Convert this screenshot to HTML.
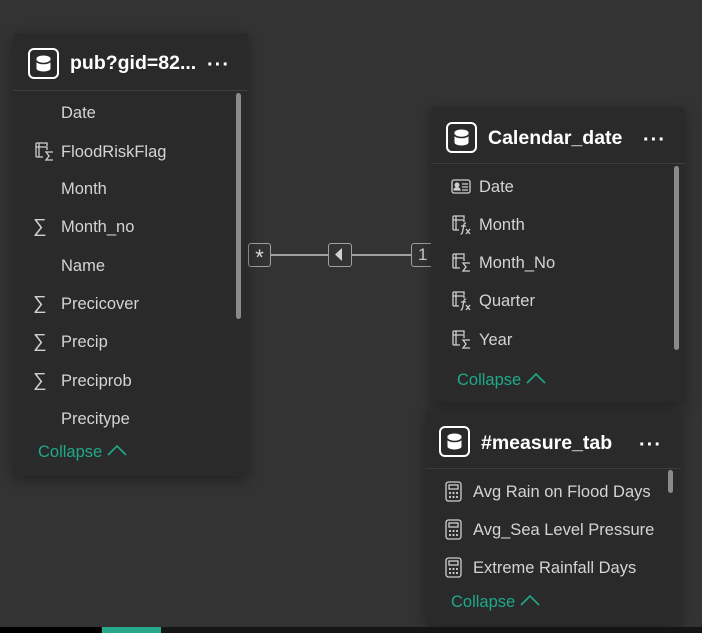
<!DOCTYPE html>
<html><head><meta charset="utf-8"><style>
*{margin:0;padding:0;box-sizing:border-box}
body{width:702px;height:633px;background:#333333;position:relative;overflow:hidden;font-family:"Liberation Sans",sans-serif}
.card{position:absolute;background:#2a2a2a;border-radius:4px;box-shadow:0 4px 14px rgba(0,0,0,.35)}
.hdr{position:absolute;left:0;right:0;top:0;border-bottom:1px solid #3d3d3d}
.db{position:absolute;width:31px;height:31px;border:2px solid #fff;border-radius:6px}
.ttl{position:absolute;color:#fff;font-weight:bold;font-size:19.5px}
.dots{position:absolute;color:#fff;font-size:20px;font-weight:bold;letter-spacing:1px}
.row{position:absolute;color:#d4d4d4;font-size:16.5px;white-space:nowrap}
.ic{position:absolute}
.col{position:absolute;color:#1fa98b;font-size:16.5px}
.sb{position:absolute;width:5px;background:#8a8a8a;border-radius:3px}
.sig{position:absolute;color:#cfcfcf;font-size:19px}
</style></head><body>
<svg width="0" height="0" style="position:absolute">
<defs>
<g id="dbg"><path d="M-7,-5 V5 a7,3 0 0 0 14,0 V-5z" fill="#fff"/><ellipse cx="0" cy="-5" rx="7" ry="3" fill="#fff"/><path d="M-7,-3 a7,3 0 0 0 14,0" stroke="#2a2a2a" stroke-width="1.6" fill="none"/></g>
<g id="tsig" fill="none" stroke="#cfcfcf" stroke-width="1.3"><path d="M9,1 H2 a1,1 0 0 0 -1,1 V14 a1,1 0 0 0 1,1 H8"/><path d="M1,5 H12 V8 M4,1 V15 M9,1 h3 v3"/><path d="M18,10 H11 L14,14 L11,18 H18"/></g>
<g id="tfx" fill="none" stroke="#cfcfcf" stroke-width="1.3"><path d="M9,1 H2 a1,1 0 0 0 -1,1 V14 a1,1 0 0 0 1,1 H7"/><path d="M1,5 H12 V7 M4,1 V15 M9,1 h3 v3"/><path d="M14,8 c-2,0 -2,1 -2.5,4 l-1,5 c-.5,2 -1,2 -2,2 M9,11 h5 M14,14 l4,5 M18,14 l-4,5"/></g>
<g id="idc" fill="none" stroke="#cfcfcf" stroke-width="1.3"><rect x="1" y="1" width="18" height="13" rx="2"/><circle cx="6" cy="6" r="1.8" fill="#cfcfcf"/><path d="M3,11 c0,-3 6,-3 6,0z" fill="#cfcfcf"/><path d="M11,5 h6 M11,8 h6 M11,11 h6"/></g>
<g id="calc" fill="none" stroke="#cfcfcf" stroke-width="1.3"><rect x="1" y="1" width="15" height="19" rx="2.5"/><rect x="4" y="4" width="9" height="4"/><g fill="#cfcfcf" stroke="none"><circle cx="5" cy="12" r="1.1"/><circle cx="8.5" cy="12" r="1.1"/><circle cx="12" cy="12" r="1.1"/><circle cx="5" cy="16" r="1.1"/><circle cx="8.5" cy="16" r="1.1"/><circle cx="12" cy="16" r="1.1"/></g></g>
</defs></svg>

<!-- relationship -->
<div style="position:absolute;left:270px;top:254px;width:141px;height:1.5px;background:#a0a0a0"></div>
<div style="position:absolute;left:248px;top:243px;width:23px;height:24px;border:1.5px solid #a0a0a0;border-radius:3px;color:#ddd;font-size:22px;text-align:center;line-height:28px">*</div>
<div style="position:absolute;left:328px;top:243px;width:24px;height:24px;border:1.5px solid #a0a0a0;border-radius:3px;background:#333"><svg width="21" height="21"><path d="M13,4 V17 L6,10.5z" fill="#d0d0d0"/></svg></div>
<div style="position:absolute;left:411px;top:243px;width:24px;height:24px;border:1.5px solid #a0a0a0;border-radius:3px;color:#ccc;font-size:17px;padding-left:6px;line-height:21px">1</div>

<!-- card 1 -->
<div class="card" style="left:13px;top:33px;width:235px;height:443px">
<div class="hdr" style="height:58px"></div>
<div class="db" style="left:15px;top:15px"><svg width="27" height="27"><use href="#dbg" x="13.5" y="13.5"/></svg></div>
<div class="ttl" style="left:57px;top:19px">pub?gid=82...</div>
<div class="dots" style="left:194px;top:21px">···</div>
<div class="sb" style="left:223px;top:60px;height:226px"></div>
<div class="row" style="left:48px;top:71px">Date</div>
<svg class="ic" style="left:22px;top:109px" width="20" height="20"><use href="#tsig"/></svg>
<div class="row" style="left:48px;top:110px">FloodRiskFlag</div>
<div class="row" style="left:48px;top:147px">Month</div>
<div class="sig" style="left:20px;top:183px">∑</div><div class="row" style="left:48px;top:185px">Month_no</div>
<div class="row" style="left:48px;top:224px">Name</div>
<div class="sig" style="left:20px;top:260px">∑</div><div class="row" style="left:48px;top:262px">Precicover</div>
<div class="sig" style="left:20px;top:298px">∑</div><div class="row" style="left:48px;top:300px">Precip</div>
<div class="sig" style="left:20px;top:337px">∑</div><div class="row" style="left:48px;top:339px">Preciprob</div>
<div class="row" style="left:48px;top:377px">Precitype</div>
<div class="col" style="left:25px;top:410px">Collapse <svg width="20" height="12" style="vertical-align:1px"><path d="M1,11 L10,2 L19,11" stroke="#1fa98b" stroke-width="1.6" fill="none"/></svg></div>
</div>

<!-- card 2 -->
<div class="card" style="left:431px;top:107px;width:254px;height:296px">
<div class="hdr" style="height:57px"></div>
<div class="db" style="left:15px;top:15px"><svg width="27" height="27"><use href="#dbg" x="13.5" y="13.5"/></svg></div>
<div class="ttl" style="left:57px;top:20px">Calendar_date</div>
<div class="dots" style="left:212px;top:22px">···</div>
<div class="sb" style="left:243px;top:59px;height:184px"></div>
<svg class="ic" style="left:20px;top:72px" width="20" height="16"><use href="#idc"/></svg>
<div class="row" style="left:48px;top:71px">Date</div>
<svg class="ic" style="left:21px;top:108px" width="20" height="22"><use href="#tfx"/></svg>
<div class="row" style="left:48px;top:109px">Month</div>
<svg class="ic" style="left:21px;top:146px" width="20" height="20"><use href="#tsig"/></svg>
<div class="row" style="left:48px;top:147px">Month_No</div>
<svg class="ic" style="left:21px;top:184px" width="20" height="22"><use href="#tfx"/></svg>
<div class="row" style="left:48px;top:185px">Quarter</div>
<svg class="ic" style="left:21px;top:223px" width="20" height="20"><use href="#tsig"/></svg>
<div class="row" style="left:48px;top:224px">Year</div>
<div class="col" style="left:26px;top:264px">Collapse <svg width="20" height="12" style="vertical-align:1px"><path d="M1,11 L10,2 L19,11" stroke="#1fa98b" stroke-width="1.6" fill="none"/></svg></div>
</div>

<!-- card 3 -->
<div class="card" style="left:426px;top:411px;width:255px;height:214px">
<div class="hdr" style="height:58px"></div>
<div class="db" style="left:13px;top:15px"><svg width="27" height="27"><use href="#dbg" x="13.5" y="13.5"/></svg></div>
<div class="ttl" style="left:55px;top:21px">#measure_tab</div>
<div class="dots" style="left:213px;top:23px">···</div>
<div class="sb" style="left:242px;top:59px;height:23px"></div>
<svg class="ic" style="left:19px;top:70px" width="18" height="22"><use href="#calc"/></svg>
<div class="row" style="left:47px;top:72px">Avg Rain on Flood Days</div>
<svg class="ic" style="left:19px;top:108px" width="18" height="22"><use href="#calc"/></svg>
<div class="row" style="left:47px;top:110px">Avg_Sea Level Pressure</div>
<svg class="ic" style="left:19px;top:146px" width="18" height="22"><use href="#calc"/></svg>
<div class="row" style="left:47px;top:148px">Extreme Rainfall Days</div>
<div class="col" style="left:25px;top:182px">Collapse <svg width="20" height="12" style="vertical-align:1px"><path d="M1,11 L10,2 L19,11" stroke="#1fa98b" stroke-width="1.6" fill="none"/></svg></div>
</div>

<!-- bottom bar -->
<div style="position:absolute;left:0;top:627px;width:702px;height:6px;background:#151515"></div>
<div style="position:absolute;left:0;top:627px;width:101px;height:6px;background:#000"></div>
<div style="position:absolute;left:102px;top:627px;width:59px;height:6px;background:#27a88b"></div>
</body></html>
